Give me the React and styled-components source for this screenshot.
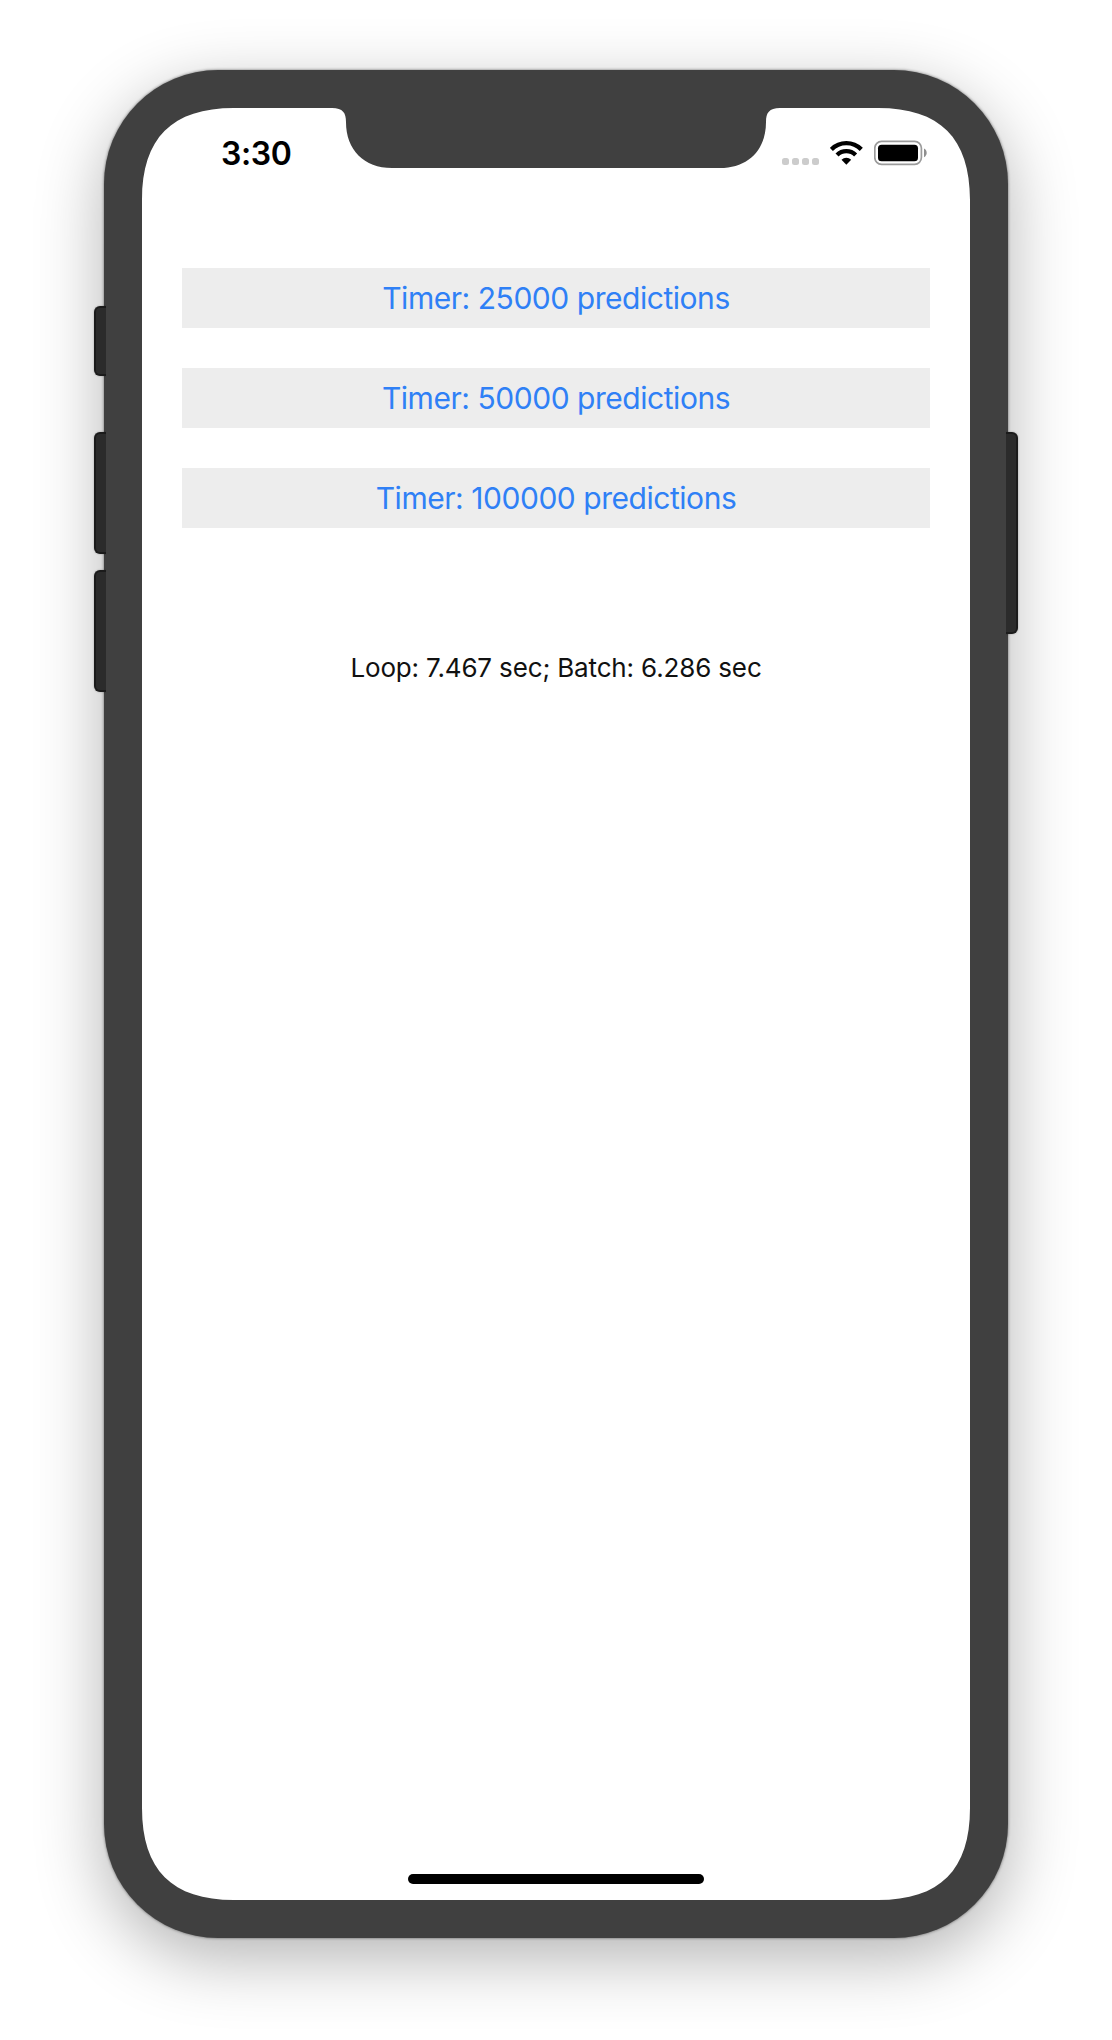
import React from "react";
import styled, { createGlobalStyle } from "styled-components";

const GlobalStyle = createGlobalStyle`
  body {
    margin: 0;
    background: #ffffff;
    font-family: Inter, "Liberation Sans", sans-serif;
  }
`;

const Page = styled.main`
  box-sizing: border-box;
  width: 1112px;
  height: 2040px;
  padding: 70px 104px 102px;
  overflow: hidden;
`;

const Device = styled.div`
  position: relative;
  box-sizing: border-box;
  width: 904px;
  height: 1868px;
  padding: 38px;
  border-radius: 114px;
  background: #404040;
  box-shadow:
    0 0 3px rgba(0, 0, 0, 0.55),
    0 20px 68px rgba(0, 0, 0, 0.3);
`;

const SideButton = styled.span`
  position: absolute;
  box-sizing: border-box;
  top: ${(p) => p.$top}px;
  ${(p) => (p.$right ? "right: -10px;" : "left: -10px;")}
  width: 12px;
  height: ${(p) => p.$height}px;
  border: 2px solid #1b1b1b;
  ${(p) => (p.$right ? "border-left: 0;" : "border-right: 0;")}
  border-radius: ${(p) => (p.$right ? "0 6px 6px 0" : "6px 0 0 6px")};
  background: #2b2b2b;
  box-shadow: 0 0 2px rgba(0, 0, 0, 0.3);
  clip-path: ${(p) => (p.$right ? "inset(-4px -4px -4px 0)" : "inset(-4px 0 -4px -4px)")};
`;

const W = 828;
const H = 1792;
const L = 92; // corner reach along each edge
const m = 30; // distance of the curve handles from the corner

// Smooth corners, with the sensor notch cut from the top edge.
const outline = [
  `M${L} 0 H190 C201 0 204 5 204 14 C204 42 222 60 250 60`,
  `H578 C606 60 624 42 624 14 C624 5 627 0 638 0 H${W - L}`,
  `C${W - m} 0 ${W} ${m} ${W} ${L} V${H - L}`,
  `C${W} ${H - m} ${W - m} ${H} ${W - L} ${H} H${L}`,
  `C${m} ${H} 0 ${H - m} 0 ${H - L} V${L}`,
  `C0 ${m} ${m} 0 ${L} 0Z`,
].join(" ");

const Screen = styled.section`
  display: flex;
  flex-direction: column;
  width: ${W}px;
  height: ${H}px;
  background: #ffffff;
  clip-path: path("${outline}");
`;

const StatusBar = styled.header`
  display: flex;
  justify-content: space-between;
  box-sizing: border-box;
  height: 88px;
  padding: 26px 42px 0 79px;
`;

const Clock = styled.time`
  font-size: 32px;
  font-weight: 600;
  line-height: 40px;
  letter-spacing: -0.4px;
  color: #000000;
`;

const StatusIcons = styled.div`
  display: flex;
  align-items: flex-start;
  padding-top: 6px;
`;

const SignalDots = styled.div`
  display: flex;
  gap: 3px;
  margin: 18px 11px 0 0;
`;

const Dot = styled.span`
  width: 7px;
  height: 7px;
  border-radius: 2.5px;
  background: #cccccc;
`;

const WifiIcon = styled.svg`
  display: block;
  margin-right: 11px;
`;

const BatteryIcon = styled.svg`
  display: block;
`;

const Content = styled.div`
  display: flex;
  flex-direction: column;
  flex: 1;
  padding: 72px 40px 0;
`;

const ButtonStack = styled.div`
  display: flex;
  flex-direction: column;
  gap: 40px;
`;

const TimerButton = styled.button`
  height: 60px;
  padding: 0;
  border: 0;
  background: #ededed;
  color: #2f80f6;
  font-family: inherit;
  font-size: 30px;
  line-height: 60px;
  letter-spacing: -0.46px;
`;

const Result = styled.p`
  margin: 120px 0 0;
  text-align: center;
  font-size: 26px;
  line-height: 40px;
  letter-spacing: -0.15px;
  color: #111111;
`;

const HomeArea = styled.footer`
  display: flex;
  justify-content: center;
  padding-bottom: 16px;
`;

const HomeIndicator = styled.div`
  width: 296px;
  height: 10px;
  border-radius: 5px;
  background: #000000;
`;

export default function App() {
  return (
    <>
      <GlobalStyle />
      <Page>
        <Device>
          <Screen>
            <StatusBar>
              <Clock>3:30</Clock>
              <StatusIcons>
                <SignalDots>
                  <Dot />
                  <Dot />
                  <Dot />
                  <Dot />
                </SignalDots>
                <WifiIcon width="33" height="25" viewBox="0 0 99 75">
                  <g transform="translate(49 73)" fill="none" stroke="#000" strokeWidth="13">
                    <path d="M-44.9 -44.9A63.5 63.5 0 0 1 44.9 -44.9" />
                    <path d="M-27.9 -27.9A39.5 39.5 0 0 1 27.9 -27.9" />
                    <path d="M0 1L-14.5 -14A21 21 0 0 1 14.5 -14Z" fill="#000" stroke="none" />
                  </g>
                </WifiIcon>
                <BatteryIcon width="54" height="26" viewBox="0 0 54 26">
                  <rect x="0.8" y="1.3" width="46.6" height="23" rx="6.8" fill="none" stroke="#9b9b9b" strokeWidth="1.7" />
                  <rect x="4" y="4.7" width="40" height="16.6" rx="3.6" fill="#000" />
                  <path d="M50 8.6C53.6 10 53.6 15.8 50 17.2Z" fill="#8f8f8f" />
                </BatteryIcon>
              </StatusIcons>
            </StatusBar>
            <Content>
              <ButtonStack>
                <TimerButton>Timer: 25000 predictions</TimerButton>
                <TimerButton>Timer: 50000 predictions</TimerButton>
                <TimerButton>Timer: 100000 predictions</TimerButton>
              </ButtonStack>
              <Result>Loop: 7.467 sec; Batch: 6.286 sec</Result>
            </Content>
            <HomeArea>
              <HomeIndicator />
            </HomeArea>
          </Screen>
          <SideButton $top={236} $height={70} />
          <SideButton $top={362} $height={122} />
          <SideButton $top={500} $height={122} />
          <SideButton $right $top={362} $height={202} />
        </Device>
      </Page>
    </>
  );
}
